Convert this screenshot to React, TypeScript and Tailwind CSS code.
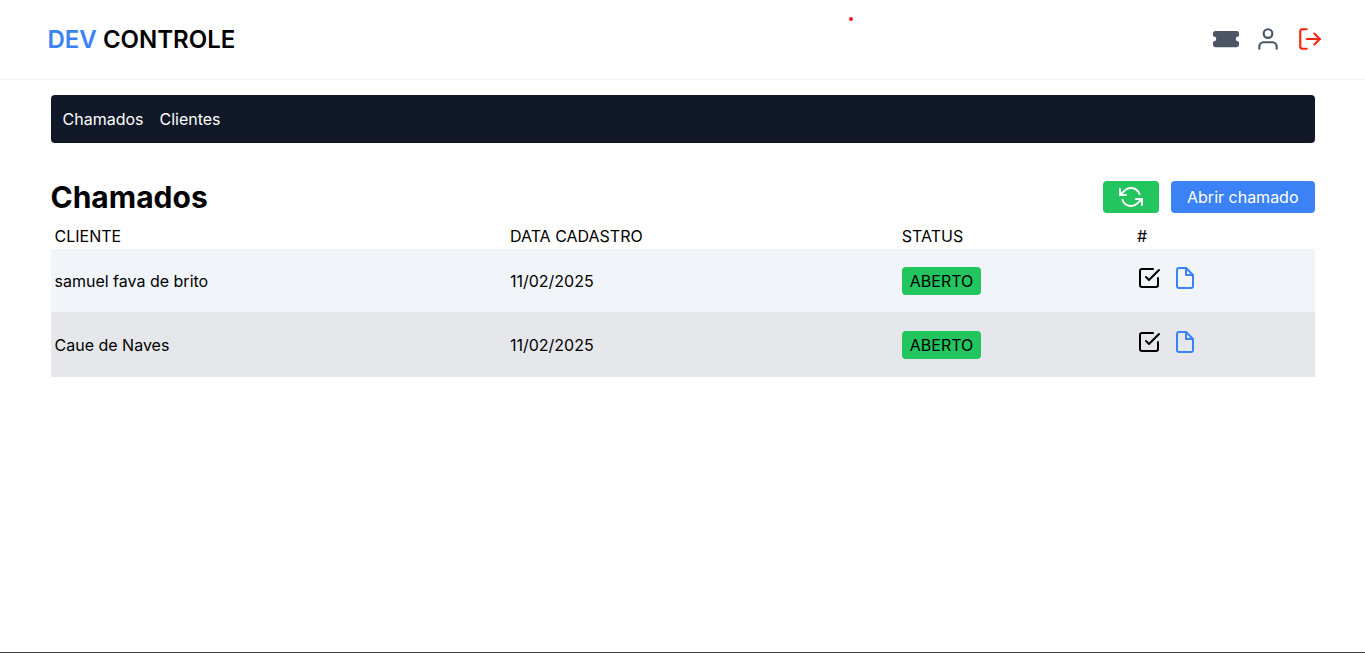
import { BsTicketFill } from "react-icons/bs";
import { FiCheckSquare, FiFile, FiLogOut, FiRefreshCcw, FiUser } from "react-icons/fi";

const tickets = [
  { id: 1, customer: "samuel fava de brito", date: "11/02/2025", status: "ABERTO" },
  { id: 2, customer: "Caue de Naves", date: "11/02/2025", status: "ABERTO" },
];

function Header() {
  return (
    <header className="relative flex h-20 w-full items-center border-b border-gray-100 bg-white px-2">
      <span className="absolute top-[17px] left-[849px] size-1 rounded-full bg-[#ed1c24]" />
      <div className="mx-auto flex w-full max-w-7xl items-center justify-between pl-[5px]">
        <h1 className="text-2xl font-semibold">
          <a href="#">
            <span className="text-[#3b82f6]">DEV</span> CONTROLE
          </a>
        </h1>
        <div className="flex items-center gap-4 pb-0.5">
          <a href="#" aria-label="Chamados">
            <BsTicketFill size={26} className="text-[#4b5563]" />
          </a>
          <a href="#" aria-label="Perfil">
            <FiUser size={26} className="text-[#4b5563]" />
          </a>
          <button type="button" aria-label="Sair">
            <FiLogOut size={26} className="text-[#ff2313]" />
          </button>
        </div>
      </div>
    </header>
  );
}

function TicketRow({ ticket }: { ticket: (typeof tickets)[number] }) {
  return (
    <tr className="h-[63px] bg-[#f1f5f9] last:h-[65px] last:bg-[#e5e7eb]">
      <td className="pt-px pl-1">{ticket.customer}</td>
      <td className="pt-px">{ticket.date}</td>
      <td className="pt-px">
        <span className="rounded bg-[#22c55e] px-2 py-1">{ticket.status}</span>
      </td>
      <td className="pt-px">
        <button type="button" aria-label="Concluir" className="mr-3">
          <FiCheckSquare size={24} />
        </button>
        <button type="button" aria-label="Detalhes">
          <FiFile size={24} className="text-[#3b82f6]" />
        </button>
      </td>
    </tr>
  );
}

export default function App() {
  return (
    <div className="min-h-screen border-b border-[#3c3c3c] bg-white font-['Inter',sans-serif] text-black">
      <Header />
      <div className="mx-auto max-w-7xl px-2">
        <nav className="mt-[15px] flex items-center gap-4 rounded bg-[#111827] p-3 text-white">
          <a href="#">Chamados</a>
          <a href="#">Clientes</a>
        </nav>
        <main className="mt-9">
          <div className="flex items-center justify-between">
            <h2 className="text-3xl font-bold">Chamados</h2>
            <div className="flex items-center gap-3">
              <button type="button" aria-label="Atualizar" className="rounded bg-[#22c55e] px-4 py-1 text-white">
                <FiRefreshCcw size={24} />
              </button>
              <a href="#" className="rounded bg-[#3b82f6] px-4 py-1 text-white">
                Abrir chamado
              </a>
            </div>
          </div>
          <table className="mt-2 w-full table-fixed">
            <thead>
              <tr className="text-left">
                <th className="w-[36.35%] pt-px pb-px pl-1 font-normal">CLIENTE</th>
                <th className="w-[31%] font-normal">DATA CADASTRO</th>
                <th className="w-[18.6%] font-normal">STATUS</th>
                <th className="font-normal">#</th>
              </tr>
            </thead>
            <tbody>
              {tickets.map((ticket) => (
                <TicketRow key={ticket.id} ticket={ticket} />
              ))}
            </tbody>
          </table>
        </main>
      </div>
    </div>
  );
}
